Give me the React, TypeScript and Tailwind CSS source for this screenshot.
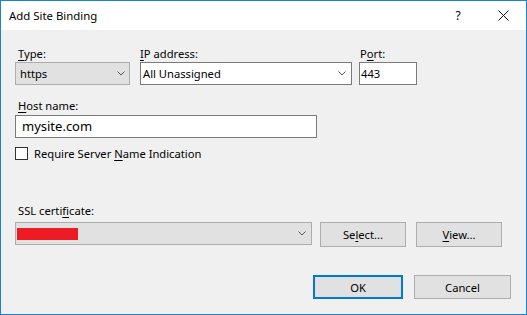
import React from "react";

const font = { fontFamily: '"Noto Sans", "Open Sans", sans-serif' };

function Chevron() {
  return (
    <svg width="8" height="5" viewBox="0 0 8 5" className="shrink-0">
      <polyline points="0.5,0.5 4,4 7.5,0.5" fill="none" stroke="#555" strokeWidth="1" />
    </svg>
  );
}

function U({ children }: { children: React.ReactNode }) {
  return <span className="underline underline-offset-[2px] decoration-1">{children}</span>;
}

export default function App() {
  return (
    <div
      className="w-[527px] h-[315px] border border-[#1883d7] flex flex-col text-[11.2px] leading-[15px] text-black"
      style={font}
    >
      {/* Title bar */}
      <div className="h-[29px] bg-white flex items-center pl-[8px] shrink-0">
        <span className="text-[11.4px]">Add Site Binding</span>
        <span className="ml-auto w-[8px] text-[12px] text-center">?</span>
        <svg width="11" height="11" viewBox="0 0 11 11" className="ml-[36px] mr-[17px]">
          <line x1="0.5" y1="0.5" x2="10.5" y2="10.5" stroke="#111" strokeWidth="1" />
          <line x1="10.5" y1="0.5" x2="0.5" y2="10.5" stroke="#111" strokeWidth="1" />
        </svg>
      </div>

      {/* Body */}
      <div className="flex-1 bg-[#f0f0f0] pl-[14px] pt-[16px] flex flex-col">
        {/* Row 1 */}
        <div className="flex">
          <div className="w-[115px] flex flex-col">
            <div className="pl-[3px]">
              <U>T</U>ype:
            </div>
            <div className="mt-[1px] h-[23px] bg-[#e1e1e1] border border-[#adadad] flex items-center justify-between pl-[4px] pr-[4px]">
              <span>https</span>
              <Chevron />
            </div>
          </div>
          <div className="ml-[10px] w-[212px] flex flex-col">
            <div>
              <U>I</U>P address:
            </div>
            <div className="mt-[1px] h-[23px] bg-white border border-[#7a7a7a] flex items-center justify-between pl-[2px] pr-[5px]">
              <span>All Unassigned</span>
              <Chevron />
            </div>
          </div>
          <div className="ml-[7px] w-[58px] flex flex-col">
            <div className="pl-[1px]">
              P<U>o</U>rt:
            </div>
            <div className="mt-[1px] h-[23px] bg-white border border-[#7a7a7a] flex items-center pl-[1px]">
              <span>443</span>
            </div>
          </div>
        </div>

        {/* Host name */}
        <div className="mt-[13px] pl-[3px]">
          <U>H</U>ost name:
        </div>
        <div className="mt-[2px] w-[302px] h-[23px] bg-white border border-[#7a7a7a] flex items-center pl-[6px] text-[13px]">
          mysite.com
        </div>

        {/* Checkbox */}
        <div className="mt-[9px] h-[13px] flex items-center">
          <div className="w-[13px] h-[13px] bg-white border border-[#333333] shrink-0" />
          <span className="ml-[6px]">
            Require Server <U>N</U>ame Indication
          </span>
        </div>

        {/* SSL certificate */}
        <div className="mt-[43px] pl-[3px]">
          SSL certi<U>f</U>icate:
        </div>
        <div className="mt-[4px] flex items-start">
          <div className="w-[297px] h-[23px] bg-[#e1e1e1] border border-[#adadad] flex items-center justify-between pl-[1px] pr-[5px]">
            <div className="w-[61px] h-[12px] bg-[#ed1c24]" />
            <Chevron />
          </div>
          <div className="ml-[8px] w-[86px] h-[25px] bg-[#e1e1e1] border border-[#adadad] flex items-center justify-center">
            <span>
              Se<U>l</U>ect...
            </span>
          </div>
          <div className="ml-[10px] w-[86px] h-[25px] bg-[#e1e1e1] border border-[#adadad] flex items-center justify-center">
            <span>
              <U>V</U>iew...
            </span>
          </div>
        </div>

        {/* OK / Cancel */}
        <div className="mt-[28px] flex">
          <div className="ml-[298px] w-[90px] h-[24px] bg-[#e1e1e1] border-2 border-[#0078d7] flex items-center justify-center">
            OK
          </div>
          <div className="ml-[11px] w-[97px] h-[24px] bg-[#e1e1e1] border border-[#adadad] flex items-center justify-center">
            Cancel
          </div>
        </div>
      </div>
    </div>
  );
}
